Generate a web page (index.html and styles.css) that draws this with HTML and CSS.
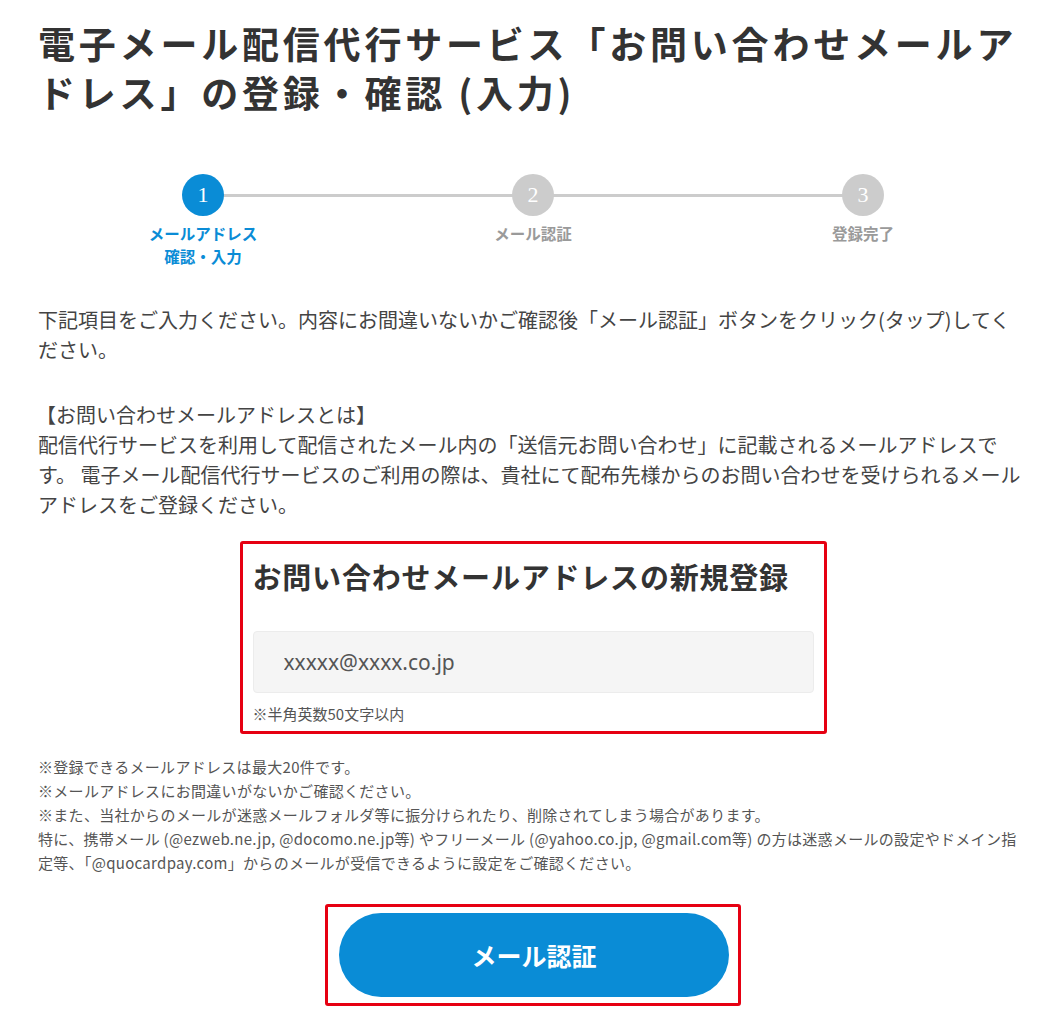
FILE: index.html
```html
<!DOCTYPE html>
<html lang="ja">
<head>
<meta charset="utf-8">
<title>お問い合わせメールアドレスの登録・確認</title>
<link rel="stylesheet" href="styles.css">
</head>
<body>
<main class="page">
  <h1 class="title">電子メール配信代行サービス「お問い合わせメールアドレス」の登録・確認 (入力)</h1>

  <ol class="steps">
    <li class="step is-current">
      <span class="step-num">1</span>
      <span class="step-label">メールアドレス<br>確認・入力</span>
    </li>
    <li class="step">
      <span class="step-num">2</span>
      <span class="step-label">メール認証</span>
    </li>
    <li class="step">
      <span class="step-num">3</span>
      <span class="step-label">登録完了</span>
    </li>
  </ol>

  <p class="lead">下記項目をご入力ください。内容にお間違いないかご確認後「メール認証」ボタンをクリック(タップ)してください。</p>

  <p class="about"><span class="about-head">【お問い合わせメールアドレスとは】</span><br>配信代行サービスを利用して配信されたメール内の「送信元お問い合わせ」に記載されるメールアドレスです。 電子メール配信代行サービスのご利用の際は、貴社にて配布先様からのお問い合わせを受けられるメールアドレスをご登録ください。</p>

  <section class="form-box">
    <h2 class="form-title">お問い合わせメールアドレスの新規登録</h2>
    <input class="form-input" type="text" value="xxxxx@xxxx.co.jp">
    <p class="form-note">※半角英数50文字以内</p>
  </section>

  <div class="notes">
    <p>※登録できるメールアドレスは最大20件です。</p>
    <p>※メールアドレスにお間違いがないかご確認ください。</p>
    <p>※また、当社からのメールが迷惑メールフォルダ等に振分けられたり、削除されてしまう場合があります。<br>特に、携帯メール (@ezweb.ne.jp, @docomo.ne.jp等) やフリーメール (@yahoo.co.jp, @gmail.com等) の方は迷惑メールの設定やドメイン指定等、「@quocardpay.com」からのメールが受信できるように設定をご確認ください。</p>
  </div>

  <div class="submit-wrap">
    <div class="submit-box">
      <button class="submit" type="button">メール認証</button>
    </div>
  </div>
</main>
</body>
</html>
```

FILE: styles.css
```css
* { box-sizing: border-box; }

html, body {
  margin: 0;
  padding: 0;
  background: #fff;
}

body {
  font-family: "Noto Sans CJK JP", "Noto Sans", sans-serif;
  color: #444;
}

.page {
  width: 990px;
  margin-left: 38px;
  padding-top: 19px;
}

.title {
  margin: 0;
  font-size: 37px;
  letter-spacing: 3.8px;
  line-height: 49px;
  font-weight: 700;
  color: #333;
}

.steps {
  list-style: none;
  margin: 57px 0 0;
  padding: 0;
  display: flex;
}

.step {
  flex: 1;
  position: relative;
  display: flex;
  flex-direction: column;
  align-items: center;
}

.step + .step::before {
  content: "";
  position: absolute;
  top: 20px;
  right: 50%;
  width: 100%;
  height: 3px;
  background: #cccccc;
}

.step-num {
  position: relative;
  z-index: 1;
  width: 42px;
  height: 42px;
  border-radius: 50%;
  background: #cccccc;
  color: #fff;
  font-family: "Liberation Serif", serif;
  font-size: 22px;
  display: flex;
  align-items: center;
  justify-content: center;
}

.step.is-current .step-num {
  background: #0a8cd6;
}

.step-label {
  margin-top: 6px;
  font-size: 15.5px;
  line-height: 23px;
  font-weight: 700;
  color: #9a9a9a;
  text-align: center;
}

.step.is-current .step-label {
  color: #0a8cd6;
}

.lead {
  margin: 37px 0 0;
  font-size: 20px;
  line-height: 30px;
  color: #444;
}

.about {
  margin: 35px 0 0;
  font-size: 20px;
  line-height: 30px;
  color: #444;
}

.about-head {
  margin-left: -2px;
}

.form-box {
  width: 587px;
  margin: 21px auto 0;
  border: 3px solid #e60012;
  border-radius: 3px;
  padding: 10px 10px 2px;
}

.form-title {
  margin: 0;
  font-size: 29px;
  line-height: 44px;
  letter-spacing: 0.8px;
  font-weight: 700;
  color: #333;
}

.form-input {
  display: block;
  width: 100%;
  height: 62px;
  margin-top: 33px;
  padding: 0 30px;
  background: #f5f5f5;
  border: 1px solid #ececec;
  border-radius: 4px;
  font-family: "Noto Sans", sans-serif;
  font-size: 21px;
  color: #555;
  outline: none;
}

.form-note {
  margin: 6px 0 0;
  font-size: 15px;
  line-height: 30px;
  color: #555;
}

.notes {
  margin-top: 21px;
  font-size: 15px;
  line-height: 24px;
  letter-spacing: 0.3px;
  color: #555;
}

.notes p {
  margin: 0;
}

.submit-wrap {
  display: flex;
  justify-content: center;
  margin-top: 29px;
}

.submit-box {
  border: 3px solid #e60012;
  border-radius: 3px;
  padding: 6px 9px 6px 11px;
}

.submit {
  display: block;
  width: 390px;
  height: 84px;
  border: none;
  border-radius: 42px;
  background: #0a8cd6;
  color: #fff;
  font-family: "Noto Sans CJK JP", sans-serif;
  font-size: 25px;
  font-weight: 700;
  cursor: pointer;
}
```
